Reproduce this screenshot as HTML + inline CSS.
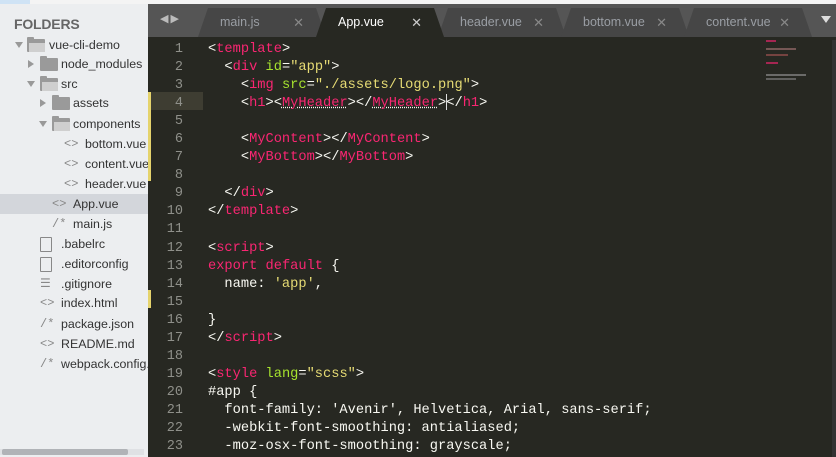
<!DOCTYPE html>
<html><head><style>
*{margin:0;padding:0;box-sizing:border-box}
html,body{width:836px;height:457px;overflow:hidden}
body{background:#272822;font-family:"Liberation Sans",sans-serif;position:relative}
#top{position:absolute;left:0;top:0;width:836px;height:4px;background:#f4f4f4}
#side{position:absolute;left:0;top:4px;width:148px;height:453px;background:#eceef0;overflow:hidden}
.fh{position:absolute;left:14px;top:12px;font-size:14px;font-weight:bold;color:#666;letter-spacing:-0.2px}
.r{position:absolute;left:0;width:148px;height:20px;font-size:12.4px;color:#333;white-space:nowrap;line-height:20px}
.sel{background:#d3d6db}
.ar{position:absolute;top:7px;width:0;height:0}
.ad{border-left:4px solid transparent;border-right:4px solid transparent;border-top:6px solid #999}
.ari{border-top:4px solid transparent;border-bottom:4px solid transparent;border-left:6px solid #999;top:6px}
.fo{position:absolute;top:4px;width:18px;height:13px;background:#9a9a9a;border-radius:1px}
.fo:before{content:"";position:absolute;left:0;top:-2px;width:7px;height:3px;background:#9a9a9a;border-radius:1px 1px 0 0}
.fo.open:after{content:"";position:absolute;left:2px;top:4px;width:16px;height:9px;background:#cfcfcf}
.ic{position:absolute;color:#888;font-size:12px;font-family:"Liberation Mono",monospace}
.fi{position:absolute;top:3px;width:12px;height:15px;border:1.5px solid #888;border-radius:1px}
.t{position:absolute}
#scroll{position:absolute;left:2px;top:445px;width:126px;height:6px;background:#b0b3b7;border-radius:2px}
#scrollbg{position:absolute;left:0;top:445px;width:144px;height:6px;background:#dfe1e4}
#tabs{position:absolute;left:148px;top:4px;width:688px;height:33px;background:#555}
.tab{position:absolute;top:4px;height:29px;background:#464646;color:#9a9ea4;font-size:12.5px;line-height:29px;clip-path:polygon(10px 0,calc(100% - 10px) 0,100% 100%,0 100%)}
.tab .x{position:absolute;right:22px;top:0;color:#888;font-size:13px}
.tab span.n{position:absolute;left:22px}
.act{background:#272822;color:#fff}
.ln{position:absolute;left:151px;width:32px;text-align:right;font:13.5px "Liberation Mono",monospace;color:#8f908a}
.cl{position:absolute;left:208px;font:13.7px "Liberation Mono",monospace;color:#f8f8f2;white-space:pre}
.p{color:#f92672}.g{color:#a6e22e}.y{color:#e6db74}
.u{text-decoration:underline dotted #f8f8f2}
</style></head><body>
<div id="top"><div style="width:30px;height:4px;background:#cfe3f5"></div></div>
<div id="side">
<div class="fh">FOLDERS</div>
<div class="r" style="top:31px"><div class="ar ad" style="left:15px"></div><div class="fo open" style="left:27px"></div><span class="t" style="left:49px">vue-cli-demo</span></div>
<div class="r" style="top:50px"><div class="ar ari" style="left:28px"></div><div class="fo" style="left:40px"></div><span class="t" style="left:61px">node_modules</span></div>
<div class="r" style="top:70px"><div class="ar ad" style="left:27px"></div><div class="fo open" style="left:40px"></div><span class="t" style="left:61px">src</span></div>
<div class="r" style="top:89px"><div class="ar ari" style="left:40px"></div><div class="fo" style="left:52px"></div><span class="t" style="left:73px">assets</span></div>
<div class="r" style="top:110px"><div class="ar ad" style="left:39px"></div><div class="fo open" style="left:52px"></div><span class="t" style="left:73px">components</span></div>
<div class="r" style="top:130px"><span class="ic" style="left:64px">&lt;&gt;</span><span class="t" style="left:85px">bottom.vue</span></div>
<div class="r" style="top:150px"><span class="ic" style="left:64px">&lt;&gt;</span><span class="t" style="left:85px">content.vue</span></div>
<div class="r" style="top:170px"><span class="ic" style="left:64px">&lt;&gt;</span><span class="t" style="left:85px">header.vue</span></div>
<div class="r sel" style="top:190px"><span class="ic" style="left:52px">&lt;&gt;</span><span class="t" style="left:73px">App.vue</span></div>
<div class="r" style="top:210px"><span class="ic" style="left:52px">/*</span><span class="t" style="left:73px">main.js</span></div>
<div class="r" style="top:230px"><div class="fi" style="left:40px"></div><span class="t" style="left:61px">.babelrc</span></div>
<div class="r" style="top:250px"><div class="fi" style="left:40px"></div><span class="t" style="left:61px">.editorconfig</span></div>
<div class="r" style="top:270px"><span class="ic" style="left:40px">☰</span><span class="t" style="left:61px">.gitignore</span></div>
<div class="r" style="top:289px"><span class="ic" style="left:40px">&lt;&gt;</span><span class="t" style="left:61px">index.html</span></div>
<div class="r" style="top:310px"><span class="ic" style="left:40px">/*</span><span class="t" style="left:61px">package.json</span></div>
<div class="r" style="top:330px"><span class="ic" style="left:40px">&lt;&gt;</span><span class="t" style="left:61px">README.md</span></div>
<div class="r" style="top:350px"><span class="ic" style="left:40px">/*</span><span class="t" style="left:61px">webpack.config.js</span></div>
<div id="scrollbg"></div><div id="scroll"></div>
</div>
<div id="tabs">
<div style="position:absolute;left:12px;top:8px;color:#bbb;font-size:11px;letter-spacing:2px">◀▶</div>
<div class="tab" style="left:50px;width:128px"><span class="n">main.js</span><span class="x">✕</span></div>
<div class="tab" style="left:290px;width:128px"><span class="n">header.vue</span><span class="x">✕</span></div>
<div class="tab" style="left:413px;width:128px"><span class="n">bottom.vue</span><span class="x">✕</span></div>
<div class="tab" style="left:536px;width:128px"><span class="n">content.vue</span><span class="x">✕</span></div>
<div class="tab act" style="left:168px;width:128px"><span class="n">App.vue</span><span class="x" style="color:#ccc">✕</span></div>
<div style="position:absolute;left:673px;top:12px;border-left:5px solid transparent;border-right:5px solid transparent;border-top:7px solid #ddd"></div>
</div>
<div style="position:absolute;left:148px;top:92px;width:3px;height:89px;background:#e5d36c"></div>
<div style="position:absolute;left:148px;top:290px;width:3px;height:18px;background:#e5d36c"></div>
<div style="position:absolute;left:151px;top:92px;width:52px;height:18px;background:#3e3d32"></div>
<div style="position:absolute;left:832px;top:40px;width:4px;height:417px;background:#333"></div>
<div class="ln" style="top:41px;line-height:18.05px">1<br>2<br>3<br>4<br>5<br>6<br>7<br>8<br>9<br>10<br>11<br>12<br>13<br>14<br>15<br>16<br>17<br>18<br>19<br>20<br>21<br>22<br>23<br>24</div>
<div class="cl" style="top:41px;line-height:18.05px">&lt;<span class="p">template</span>&gt;
  &lt;<span class="p">div</span> <span class="g">id</span>=<span class="y">"app"</span>&gt;
    &lt;<span class="p">img</span> <span class="g">src</span>=<span class="y">"./assets/logo.png"</span>&gt;
    &lt;<span class="p">h1</span>&gt;&lt;<span class="p u">MyHeader</span>&gt;&lt;/<span class="p u">MyHeader</span>&gt;&lt;/<span class="p">h1</span>&gt;

    &lt;<span class="p">MyContent</span>&gt;&lt;/<span class="p">MyContent</span>&gt;
    &lt;<span class="p">MyBottom</span>&gt;&lt;/<span class="p">MyBottom</span>&gt;

  &lt;/<span class="p">div</span>&gt;
&lt;/<span class="p">template</span>&gt;

&lt;<span class="p">script</span>&gt;
<span class="p">export</span> <span class="p">default</span> {
  name: <span class="y">'app'</span>,

}
&lt;/<span class="p">script</span>&gt;

&lt;<span class="p">style</span> <span class="g">lang</span>=<span class="y">"scss"</span>&gt;
#app {
  font-family: 'Avenir', Helvetica, Arial, sans-serif;
  -webkit-font-smoothing: antialiased;
  -moz-osx-font-smoothing: grayscale;
</div>
<div style="position:absolute;left:446px;top:94px;width:1px;height:16px;background:#ddd"></div>
<div style="position:absolute;left:766px;top:40px;width:40px;height:100px;opacity:.6">
<div style="height:2px;width:10px;background:#f92672"></div>
<div style="height:2px;width:30px;background:#a77;margin-top:6px"></div>
<div style="height:2px;width:22px;background:#a55;margin-top:4px"></div>
<div style="height:2px;width:12px;background:#f92672;margin-top:6px"></div>
<div style="height:2px;width:40px;background:#999;margin-top:10px"></div>
<div style="height:2px;width:30px;background:#888;margin-top:2px"></div>
</div>
</body></html>
